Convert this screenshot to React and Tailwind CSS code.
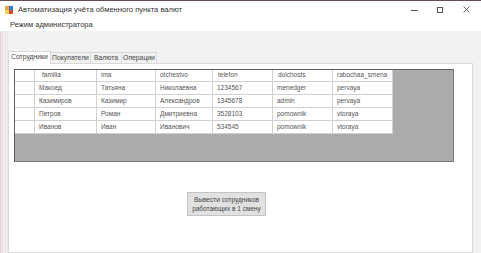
import React from "react";

const cols = [
  { name: "familia", w: 62, p: 7 },
  { name: "ima", w: 59, p: 4 },
  { name: "otchestvo", w: 57, p: 4 },
  { name: "telefon", w: 60, p: 5 },
  { name: "dolchosts", w: 60, p: 5 },
  { name: "rabochaa_smena", w: 60, p: 4 },
];

const rows = [
  ["Макоед", "Татьяна", "Николаевна", "1234567", "menedger", "pervaya"],
  ["Казимиров", "Казимир", "Александров", "1345678", "admin", "pervaya"],
  ["Петров", "Роман", "Дмитриевна", "3528103", "pomownik", "vtoraya"],
  ["Иванов", "Иван", "Иванович", "534545", "pomownik", "vtoraya"],
];

export default function App() {
  return (
    <div
      className="w-[481px] h-[253px] overflow-hidden bg-white flex flex-col border-t border-[#6b4b50] text-[#444]"
      style={{ fontFamily: '"Liberation Sans", Arial, sans-serif' }}
    >
      {/* title bar */}
      <div className="h-[17px] flex items-center shrink-0">
        <svg width="8" height="8" viewBox="0 0 8 8" className="ml-[5px] mt-[1px]">
          <rect x="0" y="0" width="4" height="4" fill="#e8a33a" />
          <rect x="4" y="0" width="4" height="4" fill="#3d7cc9" />
          <rect x="0" y="4" width="4" height="4" fill="#f2d04b" />
          <rect x="4" y="4" width="4" height="4" fill="#c94a3a" />
        </svg>
        <div className="ml-[5px] text-[7.6px] text-[#333] leading-none">
          Автоматизация учёта обменного пункта валют
        </div>
        <div className="flex-1" />
        <div className="flex items-center h-full">
          <div className="w-[26px] flex justify-center">
            <div className="w-[7px] h-px bg-[#555] mt-[1px]" />
          </div>
          <div className="w-[26px] flex justify-center">
            <div className="w-[6px] h-[6px] border border-[#555]" />
          </div>
          <div className="w-[26px] flex justify-center mr-[2px]">
            <svg width="7" height="7" viewBox="0 0 7 7">
              <path d="M0.5 0.5 L6.5 6.5 M6.5 0.5 L0.5 6.5" stroke="#555" strokeWidth="0.9" />
            </svg>
          </div>
        </div>
      </div>
      {/* menu row */}
      <div className="h-[13px] flex items-center shrink-0">
        <div className="ml-[10px] text-[7.5px] text-[#333] leading-none">Режим администратора</div>
      </div>
      {/* client area */}
      <div className="flex-1 bg-[#f2f2f2] flex">
        <div className="w-[8px] flex shrink-0">
          <div className="w-px bg-[#e8cfd2]" />
          <div className="w-px bg-[#f6eeef]" />
          <div className="w-px bg-[#e9dadc]" />
          <div className="w-[2px]" />
          <div className="w-px bg-[#e2dfe0]" />
          <div className="w-px" />
          <div className="w-px bg-[#efe7e8]" />
        </div>
        <div className="flex-1 flex flex-col pt-[19px]">
          {/* tabs */}
          <div className="flex items-end h-[13px] text-[6.8px] leading-none text-[#444]">
            <div className="h-[13px] w-[43px] bg-white border border-b-0 border-[#d9d9d9] flex items-center justify-center relative z-10 -mb-px pb-[1px]">
              Сотрудники
            </div>
            <div className="h-[11px] w-[40px] border-t border-r border-[#d9d9d9] flex items-center justify-center">
              Покупатели
            </div>
            <div className="h-[11px] w-[31px] border-t border-r border-[#d9d9d9] flex items-center justify-center">
              Валюта
            </div>
            <div className="h-[11px] w-[35px] border-t border-r border-[#d9d9d9] flex items-center justify-center">
              Операции
            </div>
          </div>
          {/* tab page */}
          <div className="flex-1 w-[465px] bg-white border border-[#d9d9d9] flex flex-col pl-[5px] pt-[5px]">
            <div className="w-[440px] h-[93px] bg-[#ababab] border border-[#5e5e5e] border-r-[#777] border-b-[#777] flex flex-col items-start text-[6.5px] leading-none">
              <div className="flex h-[12px] bg-white border-b border-[#d0d0d0]">
                <div className="w-[20px] border-r border-[#d0d0d0]" />
                {cols.map((c) => (
                  <div
                    key={c.name}
                    className="border-r border-[#d0d0d0] flex items-center text-[#555] whitespace-nowrap overflow-hidden"
                    style={{ width: c.w, paddingLeft: c.p }}
                  >
                    {c.name}
                  </div>
                ))}
              </div>
              {rows.map((r, i) => (
                <div key={i} className="flex h-[13px] bg-white border-b border-[#d0d0d0]">
                  <div className="w-[20px] border-r border-[#d0d0d0]" />
                  {r.map((v, j) => (
                    <div
                      key={j}
                      className="border-r border-[#d0d0d0] flex items-center pl-[4px] text-[#555]"
                      style={{ width: cols[j].w }}
                    >
                      {v}
                    </div>
                  ))}
                </div>
              ))}
            </div>
            <div className="ml-[173px] mt-[30px] w-[79px] h-[24px] bg-[#e1e1e1] border border-[#c4c4c4] flex flex-col items-center justify-center text-[6.5px] leading-[9px] text-[#444]">
              <div>Вывести сотрудников</div>
              <div>работающих в 1 смену</div>
            </div>
          </div>
        </div>
      </div>
    </div>
  );
}
